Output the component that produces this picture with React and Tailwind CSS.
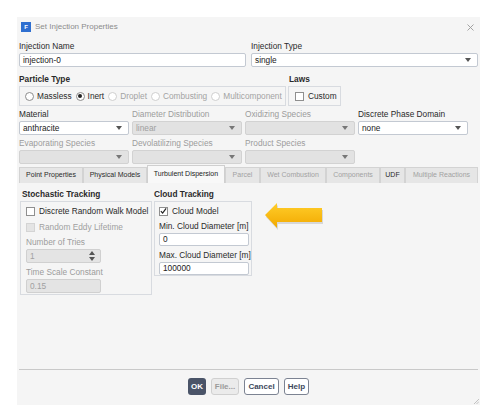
import React from 'react'

const font = { fontFamily: '"Liberation Sans", Arial, sans-serif' }

function Caret({ disabled }) {
  return (
    <svg width="6" height="4" viewBox="0 0 6 4" className="ml-auto mr-[6px] shrink-0">
      <polygon points="0,0 6,0 3,4" fill={disabled ? '#777' : '#555'} />
    </svg>
  )
}

function Select({ value, w, disabled }) {
  return (
    <div
      className={`flex h-[14px] ${w} items-center rounded-[2px] border pl-[3px] ${
        disabled ? 'border-[#d2d2d2] bg-[#e2e2e2] text-[#a0a0a0]' : 'border-[#c3c9d2] bg-white text-[#222]'
      }`}
    >
      <span className="leading-none">{value}</span>
      <Caret disabled={disabled} />
    </div>
  )
}

function Input({ value, w, h = 'h-[14px]', disabled, children }) {
  return (
    <div
      className={`flex ${h} ${w} items-center rounded-[2px] border pl-[3px] ${
        disabled ? 'border-[#d0d0d0] bg-[#e4e4e4] text-[#a0a0a0]' : 'border-[#c3c9d2] bg-white text-[#222]'
      }`}
    >
      <span className="leading-none">{value}</span>
      {children}
    </div>
  )
}

function Label({ children, disabled, className = '' }) {
  return (
    <div className={`h-[13px] leading-[13px] ${disabled ? 'text-[#9c9c9c]' : 'text-[#2a2a2a]'} ${className}`}>
      {children}
    </div>
  )
}

function Radio({ label, checked, disabled }) {
  return (
    <div className="flex items-center gap-[3px]">
      <div
        className={`flex h-[9px] w-[9px] items-center justify-center rounded-full border bg-white ${
          disabled ? 'border-[#cfcfcf]' : 'border-[#8d8d8d]'
        }`}
      >
        {checked && <div className="h-[4px] w-[4px] rounded-full bg-[#222]" />}
      </div>
      <span className={disabled ? 'text-[#a3a3a3]' : 'text-[#2a2a2a]'}>{label}</span>
    </div>
  )
}

function Check({ label, checked, disabled }) {
  return (
    <div className="flex h-[12px] items-center gap-[4px]">
      <div
        className={`flex h-[9px] w-[9px] items-center justify-center border ${
          disabled ? 'border-[#d4d4d4] bg-[#e4e4e4]' : 'border-[#8f8f8f] bg-white'
        }`}
      >
        {checked && (
          <svg width="8" height="8" viewBox="0 0 8 8">
            <path d="M1 4.2 L3 6.4 L7 1" stroke="#222" strokeWidth="1.4" fill="none" />
          </svg>
        )}
      </div>
      <span className={disabled ? 'text-[#a0a0a0]' : 'text-[#2a2a2a]'}>{label}</span>
    </div>
  )
}

const tabs = [
  { name: 'Point Properties', w: 'w-[64px]' },
  { name: 'Physical Models', w: 'w-[64px]' },
  { name: 'Turbulent Dispersion', w: 'w-[78px]', active: true },
  { name: 'Parcel', w: 'w-[35px]', disabled: true },
  { name: 'Wet Combustion', w: 'w-[66px]', disabled: true },
  { name: 'Components', w: 'w-[54px]', disabled: true },
  { name: 'UDF', w: 'w-[25px]' },
  { name: 'Multiple Reactions', w: 'w-[73px]', disabled: true },
]

export default function App() {
  return (
    <div className="h-[413px] w-[500px] bg-white pl-[17px] pt-[17px] text-[8.3px]" style={font}>
      <div className="relative flex h-[388px] w-[463px] flex-col bg-[#f5f5f5]">
        {/* title bar */}
        <div className="flex h-[20px] items-center pl-[4px] pr-[6px]">
          <div className="flex h-[10px] w-[10px] items-center justify-center bg-[#2f6fd0] text-[6px] font-bold leading-none text-white">
            F
          </div>
          <span className="ml-[4px] text-[8px] text-[#8c8c8c]">Set Injection Properties</span>
          <svg width="7" height="7" viewBox="0 0 7 7" className="ml-auto">
            <path d="M0.5 0.5 L6.5 6.5 M6.5 0.5 L0.5 6.5" stroke="#9a9a9a" strokeWidth="0.9" />
          </svg>
        </div>

        <div className="flex flex-1 flex-col px-[2px]">
          {/* injection name / type */}
          <div className="mt-[3px] flex gap-[5px]">
            <div className="w-[227px]">
              <Label>Injection Name</Label>
              <Input value="injection-0" w="w-[227px]" />
            </div>
            <div className="w-[227px]">
              <Label>Injection Type</Label>
              <Select value="single" w="w-[227px]" />
            </div>
          </div>

          {/* particle type / laws */}
          <div className="mt-[6px] flex gap-[2px]">
            <div className="w-[267px]">
              <Label className="font-bold">Particle Type</Label>
              <div className="flex h-[20px] items-center gap-[4px] border border-[#d8dbe0] pl-[5px]">
                <Radio label="Massless" />
                <Radio label="Inert" checked />
                <Radio label="Droplet" disabled />
                <Radio label="Combusting" disabled />
                <Radio label="Multicomponent" disabled />
              </div>
            </div>
            <div className="w-[53px]">
              <Label className="pl-[1px] font-bold">Laws</Label>
              <div className="flex h-[20px] items-center border border-[#d8dbe0] pl-[6px]">
                <Check label="Custom" />
              </div>
            </div>
          </div>

          {/* material row */}
          <div className="mt-[2px] flex gap-[3px]">
            <div>
              <Label>Material</Label>
              <Select value="anthracite" w="w-[110px]" />
            </div>
            <div>
              <Label disabled>Diameter Distribution</Label>
              <Select value="linear" w="w-[110px]" disabled />
            </div>
            <div>
              <Label disabled>Oxidizing Species</Label>
              <Select value="" w="w-[110px]" disabled />
            </div>
            <div>
              <Label>Discrete Phase Domain</Label>
              <Select value="none" w="w-[110px]" />
            </div>
          </div>

          {/* species row */}
          <div className="mt-[2px] flex gap-[3px]">
            <div>
              <Label disabled>Evaporating Species</Label>
              <Select value="" w="w-[110px]" disabled />
            </div>
            <div>
              <Label disabled>Devolatilizing Species</Label>
              <Select value="" w="w-[110px]" disabled />
            </div>
            <div>
              <Label disabled>Product Species</Label>
              <Select value="" w="w-[110px]" disabled />
            </div>
          </div>

          {/* tabs */}
          <div className="mt-[1px] flex h-[18px] items-end">
            {tabs.map((t) => (
              <div
                key={t.name}
                className={`flex ${t.w} items-center justify-center border border-b-0 text-[7px] ${
                  t.active
                    ? 'h-[18px] border-[#cfcfcf] bg-[#f8f8f8] text-[#222]'
                    : 'h-[16px] border-[#d3d3d3] bg-[#e6e6e6]'
                } ${t.disabled ? 'text-[#a2a2a2]' : 'text-[#2a2a2a]'}`}
              >
                {t.name}
              </div>
            ))}
          </div>

          {/* tab content */}
          <div className="mt-[5px] flex items-start pl-[1px]">
            <div className="w-[132px]">
              <Label className="pl-[2px] font-bold">Stochastic Tracking</Label>
              <div className="flex h-[94px] flex-col border border-[#d8dbe0] pl-[5px] pt-[3px]">
                <Check label="Discrete Random Walk Model" />
                <div className="mt-[4px]">
                  <Check label="Random Eddy Lifetime" disabled />
                </div>
                <Label disabled className="mt-[3px]">Number of Tries</Label>
                <Input value="1" w="w-[75px]" disabled>
                  <svg width="6" height="10" viewBox="0 0 6 10" className="ml-auto mr-[5px]">
                    <polygon points="0,4 6,4 3,0" fill="#555" />
                    <polygon points="0,6 6,6 3,10" fill="#555" />
                  </svg>
                </Input>
                <Label disabled className="mt-[3px]">Time Scale Constant</Label>
                <Input value="0.15" w="w-[75px]" disabled />
              </div>
            </div>

            <div className="ml-[2px] w-[98px]">
              <Label className="font-bold">Cloud Tracking</Label>
              <div className="flex h-[75px] flex-col border border-[#d8dbe0] pl-[4px] pt-[3px]">
                <Check label="Cloud Model" checked />
                <Label className="mt-[3px]">Min. Cloud Diameter [m]</Label>
                <Input value="0" w="w-[90px]" h="h-[13px]" />
                <Label className="mt-[3px]">Max. Cloud Diameter [m]</Label>
                <Input value="100000" w="w-[90px]" h="h-[13px]" />
              </div>
            </div>

            <svg width="60" height="30" viewBox="0 0 60 30" className="ml-[12px] mt-[13px]">
              <defs>
                <linearGradient id="ag" x1="0" y1="0" x2="0" y2="1">
                  <stop offset="0" stopColor="#ffcd2a" />
                  <stop offset="1" stopColor="#f2a900" />
                </linearGradient>
              </defs>
              <polygon points="2,16 14,4 14,9 59,9 59,23 14,23 14,29" fill="rgba(0,0,0,0.12)" />
              <polygon points="1,14 13,2 13,7 58,7 58,21 13,21 13,27" fill="url(#ag)" />
            </svg>
          </div>

          {/* footer */}
          <div className="mt-auto h-px bg-[#c9c9c9]" />
          <div className="mb-[10px] mt-[8px] flex justify-center gap-[5px] text-[8px] font-bold">
            <div className="flex h-[17px] w-[18px] items-center justify-center rounded-[3px] bg-[#4a5468] text-white">
              OK
            </div>
            <div className="flex h-[17px] w-[28px] items-center justify-center rounded-[3px] border border-[#d0d0d0] bg-[#ebebeb] text-[#9a9a9a]">
              File...
            </div>
            <div className="flex h-[17px] w-[35px] items-center justify-center rounded-[3px] border border-[#7c8392] bg-white text-[#3d475b]">
              Cancel
            </div>
            <div className="flex h-[17px] w-[25px] items-center justify-center rounded-[3px] border border-[#7c8392] bg-white text-[#3d475b]">
              Help
            </div>
          </div>
        </div>

        <svg width="6" height="6" viewBox="0 0 6 6" className="absolute bottom-[1px] right-[1px]">
          <path d="M6 1 L1 6 M6 3.5 L3.5 6" stroke="#b5b5b5" strokeWidth="0.8" />
        </svg>
      </div>
    </div>
  )
}
